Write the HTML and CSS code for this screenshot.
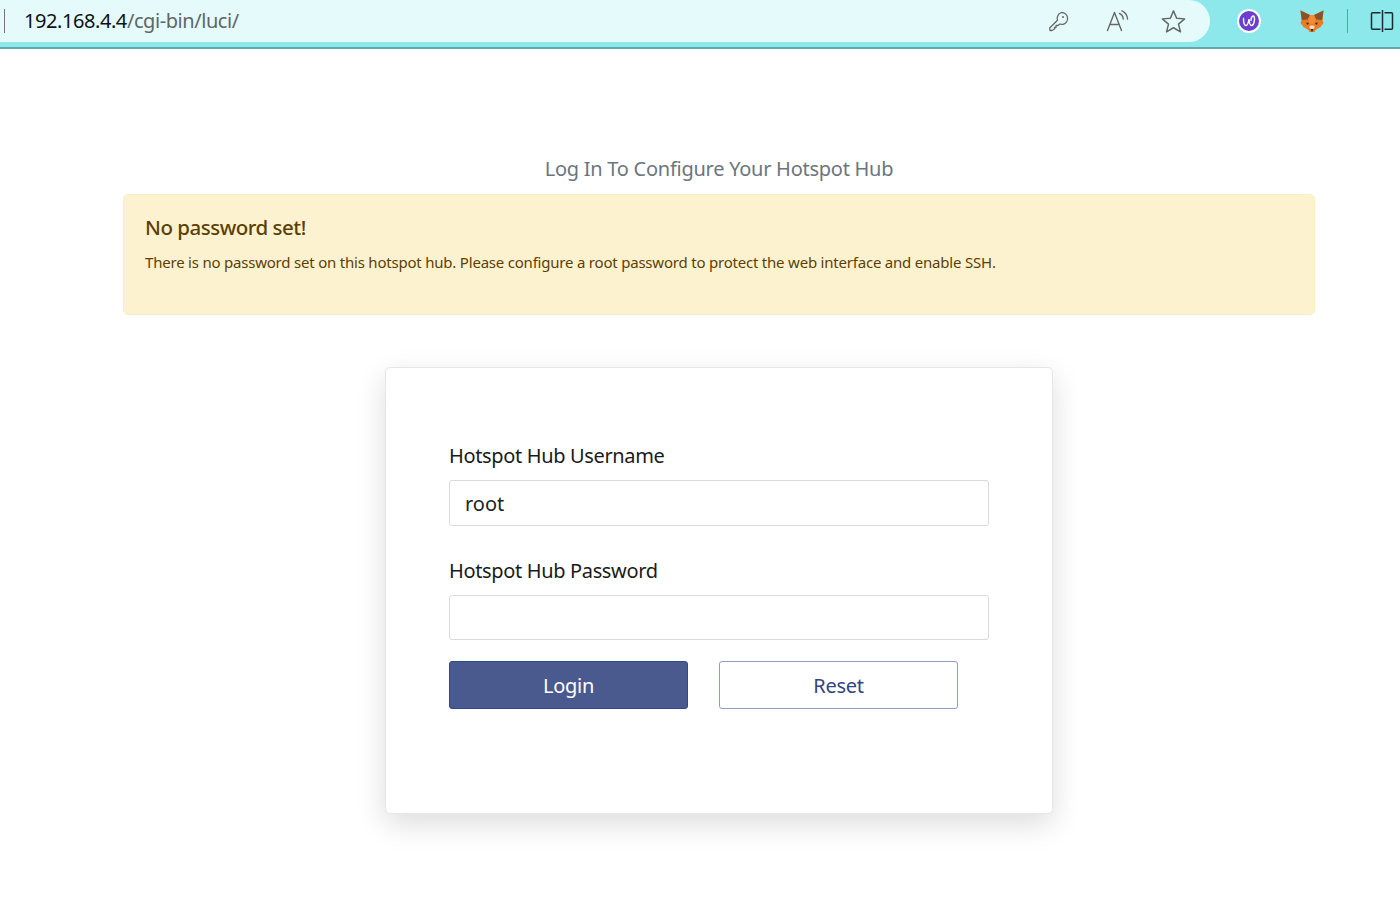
FILE: index.html
```html
<!DOCTYPE html>
<html lang="en">
<head>
<meta charset="utf-8">
<title>Log In</title>
<link rel="stylesheet" href="styles.css">
</head>
<body>
<header class="browser">
  <div class="address">
    <span class="caret"></span>
    <span class="url"><span class="host">192.168.4.4</span>/cgi-bin/luci/</span>
    <div class="addr-icons">
      <svg class="ic key" viewBox="0 0 22 22" fill="none" stroke="#666" stroke-width="1.3" stroke-linejoin="round"><path d="M13.5 2.5a6 6 0 0 1 1.6 11.8c-1.300.3-2.200.1-3.100-.3L10 15.500H8v2H6.500v1.500L4 20.500H2l-.3-2.500 7.800-7.800c-.5-1.200-.5-2.400 0-3.700a6 6 0 0 1 4-4z"/><circle cx="15" cy="7" r="1" fill="#666" stroke="none"/></svg>
      <svg class="ic read" viewBox="0 0 24 22" fill="none" stroke="#666" stroke-width="1.4" stroke-linecap="round" stroke-linejoin="round"><path d="M1.500 20.500 8.500 2.500l7 18M4 14.500h9"/><path d="M13.500 3.500c2.500 1 3.500 3 3.800 5.500M16 .8c3.500 1.500 5.200 4.700 5.500 8.200"/></svg>
      <svg class="ic star" viewBox="0 0 24 24" fill="none" stroke="#666" stroke-width="1.4" stroke-linejoin="round"><path d="M12 1.800l3 7.100 7.700.6-5.900 5 1.900 7.500-6.700-4-6.700 4 1.900-7.500-5.900-5 7.700-.6z"/></svg>
    </div>
  </div>
  <div class="tools">
    <svg class="ext wave" viewBox="0 0 24 24"><circle cx="12" cy="12" r="12" fill="#fff"/><circle cx="12" cy="12" r="10" fill="#6a3fd0"/><path d="M6.500 9.500c0 3.500 1 7 2.500 7 1.800 0 2.600-4 3-6.500.2 3 .8 6.500 2.500 6.500 2.300 0 3.800-6 2.600-9-.9-1.800-3.300.6-3.100 4" fill="none" stroke="#fff" stroke-width="1.400" stroke-linecap="round"/></svg>
    <svg class="ext fox" viewBox="0 0 24 24"><path d="M.5 1.500 10 6h4l9.500-4.500L22.500 11l1 3-3 4-5 3-1 2h-5l-1-2-5-3-3-4 1-3z" fill="#ea7a23"/><path d="M.5 1.500 10 6 8 10.500 1.800 11zM23.500 1.500 14 6l2 4.500 6.200.5z" fill="#8a5228"/><path d="M10 6h4l2 4.500-2.500 5h-3L8 10.500z" fill="#f08a35"/><path d="M9 18l2 2h2l2-2-1.500-1.500h-3z" fill="#f3dcc8"/><path d="M10.800 20h2.400l-.6 2.500h-1.200z" fill="#2b2420"/><path d="M6 13.500l3 .5-1.500 2zM18 13.500l-3 .5 1.500 2z" fill="#3b2a20"/></svg>
    <span class="sep"></span>
    <svg class="ext split" viewBox="0 0 24 24" fill="none" stroke="#1c2b30" stroke-width="1.500"><path d="M10.500 3.800H2.500a1 1 0 0 0-1 1v14.400a1 1 0 0 0 1 1h8M14.500 3.800h7a1 1 0 0 1 1 1v14.400a1 1 0 0 1-1 1h-7"/><path d="M12.500 1v22"/></svg>
  </div>
</header>
<main class="page">
  <h2 class="title">Log In To Configure Your Hotspot Hub</h2>
  <section class="alert">
    <h4 class="alert-head">No password set!</h4>
    <p class="alert-text">There is no password set on this hotspot hub. Please configure a root password to protect the web interface and enable SSH.</p>
  </section>
  <form class="card">
    <label class="label">Hotspot Hub Username</label>
    <input class="input tall" type="text" value="root">
    <label class="label second">Hotspot Hub Password</label>
    <input class="input" type="password">
    <div class="actions">
      <button class="btn primary" type="button">Login</button>
      <button class="btn outline" type="button">Reset</button>
    </div>
  </form>
</main>
</body>
</html>
```
FILE: styles.css
```css
* { box-sizing: border-box; }
html, body { margin: 0; padding: 0; }
body {
  background: #fff;
  font-family: "Noto Sans", "Open Sans", sans-serif;
  color: #212529;
  height: 908px;
  overflow: hidden;
}
.browser {
  height: 49px;
  background: #8ce8eb;
  border-bottom: 2px solid #5fa9ad;
  display: flex;
  align-items: flex-start;
}
.address {
  width: 1210px;
  height: 42px;
  background: #e5fbfb;
  border-radius: 0 21px 21px 0;
  display: flex;
  align-items: center;
  padding-left: 4px;
  flex: none;
}
.caret { width: 1px; height: 24px; background: #777; margin-right: 19px; }
.url { font-size: 20px; color: #5f6668; letter-spacing: -0.43px; margin-bottom: 2px; }
.host { color: #111; }
.addr-icons { margin-left: auto; display: flex; align-items: center; }
.ic { display: block; }
.key { width: 22px; height: 22px; margin-right: 36px; }
.read { width: 24px; height: 22px; margin-right: 31px; }
.star { width: 25px; height: 25px; margin-right: 24px; }
.tools { flex: 1; height: 42px; display: flex; align-items: center; padding-left: 27px; }
.ext { display: block; flex: none; }
.wave { width: 24px; height: 24px; margin-right: 39px; }
.fox { width: 24px; height: 24px; }
.sep { width: 1px; height: 24px; background: #5f9ea2; margin: 0 22px 0 23px; }
.split { width: 24px; height: 24px; }
.page { padding: 107px 85px 0 123px; }
.title {
  margin: 0 0 12px;
  font-size: 20px;
  line-height: 26px;
  font-weight: 400;
  color: #6c757d;
  text-align: center;
  letter-spacing: -0.26px;
}
.alert {
  height: 121px;
  background: #fdf2d0;
  border: 1px solid #fceec2;
  border-radius: 5px;
  padding: 19px 21px;
  color: #5c3f04;
}
.alert-head { margin: 0 0 9px; font-size: 20.500px; line-height: 27px; font-weight: 500; letter-spacing: -0.49px; }
.alert-text { margin: 0; font-size: 15px; line-height: 24px; letter-spacing: -0.21px; }
.card {
  width: 668px;
  height: 447px;
  margin: 52px auto 0;
  background: #fff;
  border: 1px solid #e6e6e6;
  border-radius: 5px;
  box-shadow: 0 10px 30px rgba(0, 0, 0, .14);
  padding: 73px 63px 0;
  display: flex;
  flex-direction: column;
}
.label { font-size: 20px; line-height: 30px; color: #1a1a1a; letter-spacing: -0.35px; margin-bottom: 9px; }
.label.second { margin-top: 30px; }
.input {
  width: 540px;
  height: 45px;
  border: 1px solid #d8dbde;
  border-radius: 3px;
  background: #fff;
  padding: 0 15px;
  font: 20px "Noto Sans", "Open Sans", sans-serif;
  color: #222;
}
.input.tall { height: 46px; }
.actions { display: flex; gap: 31px; margin-top: 21px; }
.btn {
  width: 239px;
  height: 48px;
  border-radius: 3px;
  font: 20px "Noto Sans", "Open Sans", sans-serif;
  letter-spacing: -0.3px;
  padding: 0;
}
.primary { background: #4a5a8f; border: 1px solid #2f4a8a; color: #fff; }
.outline { background: #fff; border: 1px solid #939dbf; color: #34457f; }
```
